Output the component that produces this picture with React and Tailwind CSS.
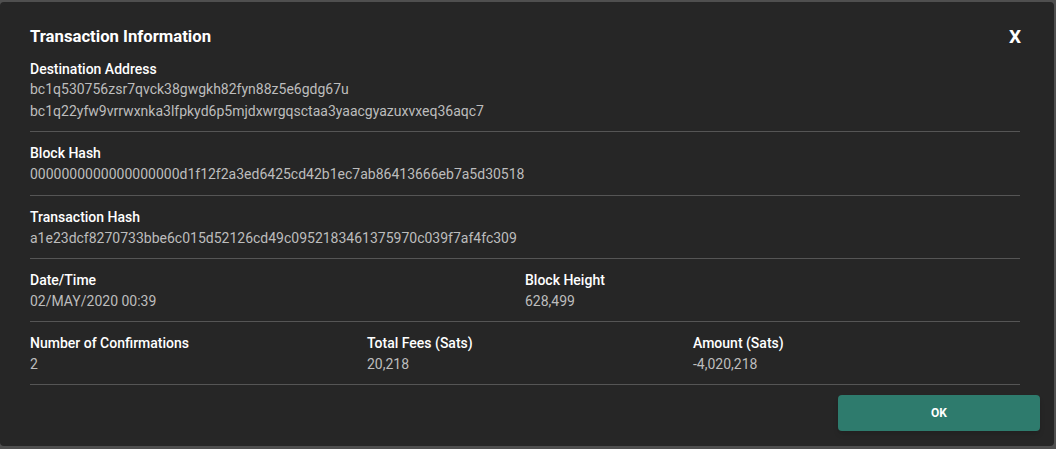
const rows = [
  { label: 'Block Hash', value: '0000000000000000000d1f12f2a3ed6425cd42b1ec7ab86413666eb7a5d30518', pb: 'pb-[11px]' },
  { label: 'Transaction Hash', value: 'a1e23dcf8270733bbe6c015d52126cd49c0952183461375970c039f7af4fc309', pb: 'pb-[10px]' },
];

function Field({ label, value, className = '' }) {
  return (
    <div className={className}>
      <div className="text-[14px] leading-[20px] font-medium text-white">{label}</div>
      <div className="mt-px text-[14px] leading-[20px] text-[#bdbdbd]">{value}</div>
    </div>
  );
}

export default function App() {
  return (
    <div className="w-[1056px] h-[449px] bg-[#4f4f4f] pt-[2px]" style={{ fontFamily: 'Roboto, "Noto Sans", sans-serif' }}>
      <div className="w-[1054px] h-[444px] rounded-[4px] bg-[#262626] flex flex-col">
        <div className="pl-[30px] pr-[34px]">
          <div className="flex items-center justify-between pt-[25px]">
            <h2 className="text-[16.7px] leading-[20px] font-bold text-white">Transaction Information</h2>
            <span className="text-[19px] leading-[20px] font-bold text-white -mr-[1px]">X</span>
          </div>

          <div className="pt-[13px] pb-[9px] border-b border-[#555555]">
            <div className="text-[14px] leading-[18px] font-medium text-white">Destination Address</div>
            <div className="text-[14px] leading-[22px] text-[#bdbdbd]">bc1q530756zsr7qvck38gwgkh82fyn88z5e6gdg67u</div>
            <div className="text-[14px] leading-[22px] text-[#bdbdbd]">bc1q22yfw9vrrwxnka3lfpkyd6p5mjdxwrgqsctaa3yaacgyazuxvxeq36aqc7</div>
          </div>

          {rows.map((r) => (
            <Field key={r.label} label={r.label} value={r.value} className={`pt-[11px] ${r.pb} border-b border-[#555555]`} />
          ))}

          <div className="flex pt-[11px] pb-[10px] border-b border-[#555555]">
            <Field label="Date/Time" value="02/MAY/2020 00:39" className="w-[495px]" />
            <Field label="Block Height" value="628,499" className="flex-1" />
          </div>

          <div className="flex pt-[11px] pb-[10px] border-b border-[#555555]">
            <Field label="Number of Confirmations" value="2" className="w-[337px]" />
            <Field label="Total Fees (Sats)" value="20,218" className="w-[326px]" />
            <Field label="Amount (Sats)" value="-4,020,218" className="flex-1" />
          </div>
        </div>

        <div className="flex justify-end pt-[10px] pr-[14px]">
          <button className="w-[202px] h-[36px] rounded-[4px] bg-[#2e7b6d] text-white text-[12px] font-bold shadow-md">
            OK
          </button>
        </div>
      </div>
    </div>
  );
}
